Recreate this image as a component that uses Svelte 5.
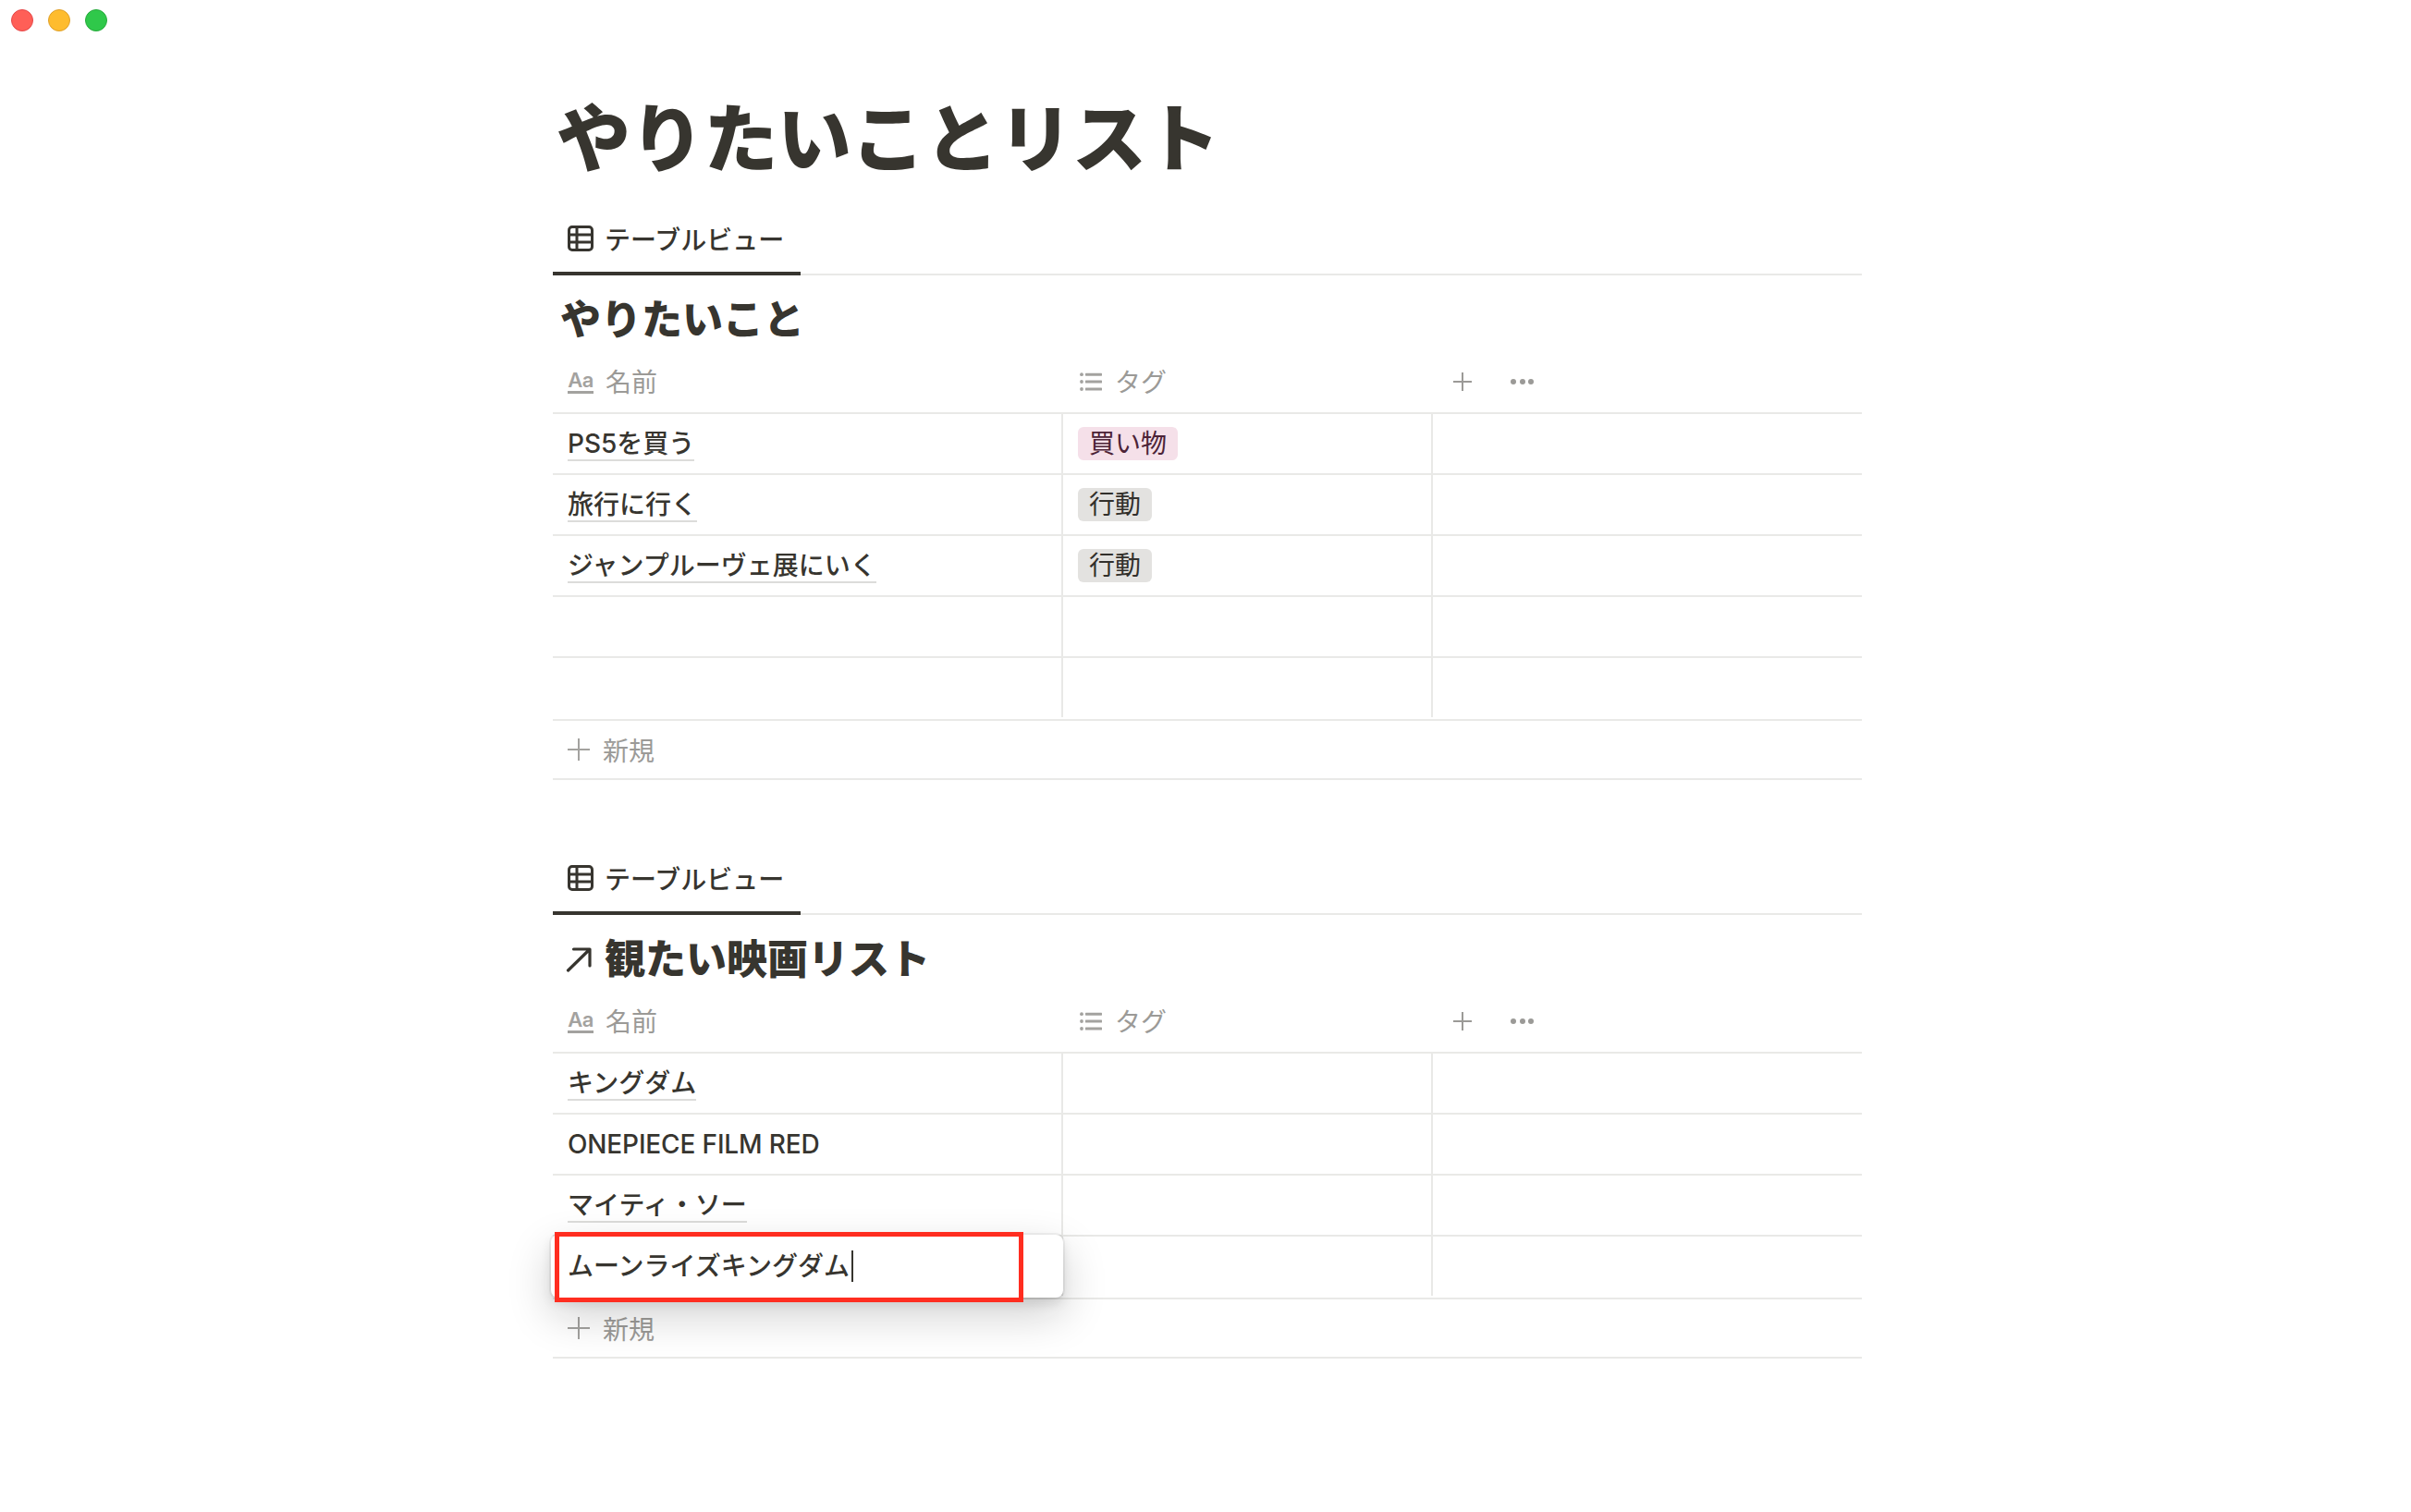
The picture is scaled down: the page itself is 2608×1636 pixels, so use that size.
<script>
  const tables = [
    {
      title: 'やりたいこと',
      linked: false,
      rows: [
        { name: 'PS5を買う', link: true, tag: { label: '買い物', tone: 'pink' } },
        { name: '旅行に行く', link: true, tag: { label: '行動', tone: 'gray' } },
        { name: 'ジャンプルーヴェ展にいく', link: true, tag: { label: '行動', tone: 'gray' } },
        { name: '', link: false },
        { name: '', link: false }
      ]
    },
    {
      title: '観たい映画リスト',
      linked: true,
      rows: [
        { name: 'キングダム', link: true },
        { name: 'ONEPIECE FILM RED', link: false, latin: true },
        { name: 'マイティ・ソー', link: true },
        { name: '', link: false, editing: 'ムーンライズキングダム' }
      ]
    }
  ];
</script>

<div class="app">
  <div class="lights">
    <span class="light red"></span>
    <span class="light amber"></span>
    <span class="light green"></span>
  </div>

  <main class="page">
    <h1>やりたいことリスト</h1>

    {#each tables as table}
      <section class="block">
        <div class="tabs">
          <div class="tab">
            <svg class="tab-icon" viewBox="0 0 28 28" fill="none" stroke="#37352f" stroke-width="3">
              <rect x="1.5" y="1.5" width="25" height="25" rx="3.4" />
              <path d="M1.5 10h25M1.5 18h25M10 1.5v25" />
            </svg>
            <span>テーブルビュー</span>
          </div>
        </div>

        <h2 class="table-title">
          {#if table.linked}
            <svg class="arrow" viewBox="0 0 28 28" fill="none" stroke="#37352f" stroke-width="3.2" stroke-linecap="round" stroke-linejoin="round">
              <path d="M2.5 26 25.5 3.5M8.5 3h17.5V21" />
            </svg>
          {/if}
          <span>{table.title}</span>
        </h2>

        <div class="head grid">
          <div class="head-cell">
            <span class="aa">Aa</span>
            <span>名前</span>
          </div>
          <div class="head-cell tagcol">
            <svg class="list-icon" viewBox="0 0 24 20" fill="#a3a29f">
              <circle cx="2" cy="2.2" r="1.9" />
              <circle cx="2" cy="10" r="1.9" />
              <circle cx="2" cy="18" r="1.9" />
              <rect x="6" y="0.7" width="18" height="3" rx="0.6" />
              <rect x="6" y="8.5" width="18" height="3" rx="0.6" />
              <rect x="6" y="16.5" width="18" height="3" rx="0.6" />
            </svg>
            <span>タグ</span>
          </div>
          <div class="head-actions">
            <svg class="plus" viewBox="0 0 20 20" fill="none" stroke="#9b9a97" stroke-width="2">
              <path d="M10 0v20M0 10h20" />
            </svg>
            <span class="dots"><i></i><i></i><i></i></span>
          </div>
        </div>

        {#each table.rows as row, i}
          <div class="row grid" class:last={i === table.rows.length - 1}>
            <div class="cell first">
              {#if row.link}
                <span class="name link">{row.name}</span>
              {:else if row.name}
                <span class="name" class:latin={row.latin}>{row.name}</span>
              {/if}
              {#if row.editing}
                <div class="editor">
                  <span class="name">{row.editing}</span><span class="caret"></span>
                </div>
                <div class="annotation"></div>
              {/if}
            </div>
            <div class="cell second">
              {#if row.tag}
                <span class="tag {row.tag.tone}">{row.tag.label}</span>
              {/if}
            </div>
            <div class="cell"></div>
          </div>
        {/each}

        <div class="new-row">
          <svg class="new-plus" viewBox="0 0 24 24" fill="none" stroke="#a3a29f" stroke-width="2">
            <path d="M12 0v24M0 12h24" />
          </svg>
          <span>新規</span>
        </div>
      </section>
    {/each}
  </main>
</div>

<style>
  :global(body) {
    margin: 0;
    background: #fff;
  }

  .app {
    width: 2608px;
    height: 1636px;
    overflow: hidden;
    background: #fff;
    color: #37352f;
    font-family: Inter, "Noto Sans CJK JP", "Liberation Sans", sans-serif;
    font-size: 28px;
  }

  .lights {
    display: flex;
    gap: 16px;
    height: 24px;
    padding: 10px 12px;
  }

  .light {
    width: 24px;
    height: 24px;
    border-radius: 50%;
    box-sizing: border-box;
    border: 1px solid;
  }

  .red { background: #ff5f57; border-color: #e5484a; }
  .amber { background: #febc2e; border-color: #dfa02a; }
  .green { background: #2fc84a; border-color: #27aa3c; }

  .page {
    width: 1416px;
    margin-left: 598px;
    padding-top: 54px;
  }

  h1 {
    margin: 0 0 20px;
    padding-left: 4px;
    height: 104px;
    font-size: 80px;
    line-height: 104px;
    font-weight: 900;
    letter-spacing: -0.3px;
    white-space: nowrap;
  }

  .block + .block {
    margin-top: 70px;
  }

  .tabs {
    height: 76px;
    box-sizing: border-box;
    border-bottom: 2px solid #e9e9e7;
  }

  .tab {
    display: flex;
    align-items: center;
    gap: 12px;
    width: 268px;
    height: 76px;
    box-sizing: border-box;
    padding: 0 0 0 16px;
    border-bottom: 4px solid #37352f;
    font-weight: 500;
    white-space: nowrap;
  }

  .tab-icon {
    width: 28px;
    height: 28px;
    flex: none;
  }

  .table-title {
    display: flex;
    align-items: center;
    gap: 14px;
    height: 82px;
    box-sizing: border-box;
    margin: 0;
    padding: 14px 0 0 8px;
    font-size: 44px;
    line-height: 58px;
    font-weight: 900;
    white-space: nowrap;
  }

  .arrow {
    width: 28px;
    height: 28px;
    margin-left: 6px;
    flex: none;
  }

  .grid {
    display: grid;
    grid-template-columns: 552px 400px 464px;
  }

  .head {
    height: 68px;
    box-sizing: border-box;
    border-bottom: 2px solid #e9e9e7;
    color: #9b9a97;
  }

  .head-cell {
    display: flex;
    align-items: center;
    gap: 13px;
    padding-left: 16px;
    line-height: 66px;
    white-space: nowrap;
  }

  .head-cell > span:last-child {
    position: relative;
    top: 1px;
  }

  .head-cell.tagcol {
    padding-left: 18px;
    gap: 14px;
  }

  .aa {
    display: block;
    width: 28px;
    height: 22px;
    border-bottom: 3px solid #a3a29f;
    font-size: 22px;
    line-height: 21px;
    font-weight: 600;
    letter-spacing: -0.5px;
    color: #a3a29f;
    text-align: center;
  }

  .list-icon {
    width: 24px;
    height: 20px;
    flex: none;
  }

  .head-actions {
    display: flex;
    align-items: center;
    gap: 42px;
    padding-left: 22px;
  }

  .plus {
    width: 20px;
    height: 20px;
    flex: none;
  }

  .dots {
    display: flex;
    gap: 3.5px;
  }

  .dots i {
    display: block;
    width: 6px;
    height: 6px;
    border-radius: 50%;
    background: #9b9a97;
  }

  .row {
    height: 66px;
    box-sizing: border-box;
    border-bottom: 2px solid #e9e9e7;
  }

  .row.last {
    height: 68px;
  }

  .cell {
    position: relative;
    display: flex;
    align-items: center;
    height: 64px;
    box-sizing: border-box;
    padding-left: 16px;
  }

  .cell.first,
  .cell.second {
    border-right: 2px solid #e9e9e7;
  }

  .name {
    display: inline-block;
    font-weight: 500;
    line-height: 36px;
    white-space: nowrap;
  }

  .latin {
    letter-spacing: -0.15px;
  }

  .link {
    padding-top: 2px;
    line-height: 34px;
    border-bottom: 2px solid #dcdcda;
  }

  .tag {
    display: inline-block;
    height: 36px;
    padding: 0 12px;
    border-radius: 6px;
    line-height: 36px;
    white-space: nowrap;
  }

  .pink {
    background: #f5e0e9;
    color: #4c2337;
  }

  .gray {
    background: #e3e2e0;
    color: #32302c;
  }

  .editor {
    position: absolute;
    left: -2px;
    top: -2px;
    right: -2px;
    height: 68px;
    box-sizing: border-box;
    display: flex;
    align-items: center;
    padding-left: 18px;
    background: #fff;
    border-radius: 8px;
    box-shadow:
      rgba(15, 15, 15, 0.05) 0 0 0 2px,
      rgba(15, 15, 15, 0.1) 0 6px 12px,
      rgba(15, 15, 15, 0.2) 0 18px 48px;
    z-index: 2;
  }

  .caret {
    display: block;
    width: 2px;
    height: 34px;
    margin-left: 2px;
    background: #37352f;
  }

  .annotation {
    position: absolute;
    left: 2px;
    top: -5px;
    width: 507px;
    height: 76px;
    box-sizing: border-box;
    border: 5px solid #ff2d20;
    z-index: 3;
  }

  .new-row {
    display: flex;
    align-items: center;
    gap: 14px;
    height: 64px;
    box-sizing: border-box;
    padding-left: 16px;
    border-bottom: 2px solid #e9e9e7;
    color: #9b9a97;
    white-space: nowrap;
  }

  .new-plus {
    width: 24px;
    height: 24px;
    flex: none;
  }
</style>
